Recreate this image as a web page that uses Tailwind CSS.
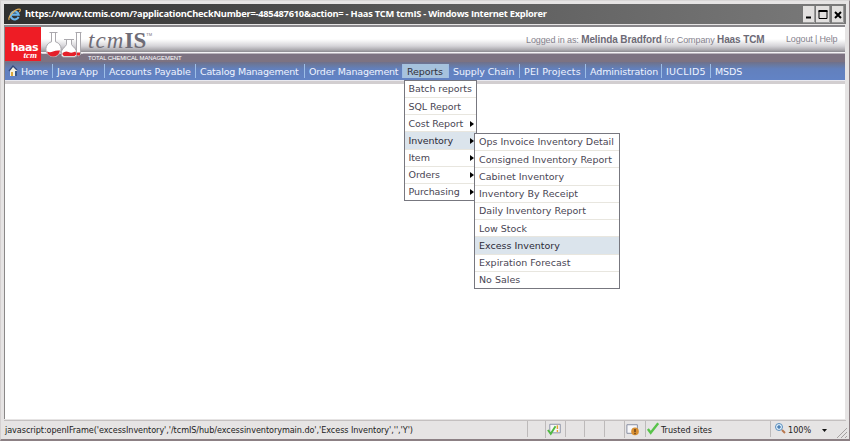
<!DOCTYPE html>
<html lang="en">
<head>
<meta charset="utf-8">
<title>Haas TCM tcmIS</title>
<script src="https://cdn.jsdelivr.net/npm/@tailwindcss/browser@4"></script>
</head>
<body class="w-[850px] h-[441px] overflow-hidden bg-[#e6e4e4] font-['DejaVu_Sans',sans-serif] text-[9.5px] whitespace-nowrap">
<div class="relative flex h-[441px] w-[850px] flex-col border-x-[1px] border-b-2 border-l-[#d4d0d0] border-r-[#8c8084] border-b-[#8c8084] border-t border-t-[#d8d6d6] px-[3px] pt-[3px]">
  <!-- title bar -->
  <header class="flex h-[20px] shrink-0 items-center bg-linear-to-r from-[#303030] via-[#5a5a5a] to-[#7a7a7a] pl-[4px]">
    <svg class="size-[13px]" viewBox="0 0 13 13" fill="none"><path d="M10.5 8.8A4 4 0 1 1 10.6 6.6H3.4" stroke="#6bb4ea" stroke-width="2.1"/><path d="M1.2 12C-.6 9 7 .2 12 1.2c.8.8 0 2-.8 3" stroke="#e5b05a" stroke-width="1.1"/></svg>
    <h1 class="ml-[4px] w-[524px] font-['Open_Sans',sans-serif] text-[9.3px] font-bold leading-[18px] tracking-[-0.24px] text-white">https://www.tcmis.com/?applicationCheckNumber=-485487610&amp;action= - Haas TCM tcmIS - Windows Internet Explorer</h1>
    <div class="ml-auto mr-[2px] flex gap-[1px]">
      <svg class="h-[17px] w-[12px] bg-[#e2e0df]" viewBox="0 0 12 17"><path d="M3 11.5h5" stroke="#000" stroke-width="2"/><path d="M11.5 0v16.5H0" fill="none" stroke="#999"/></svg>
      <svg class="h-[17px] w-[14px] bg-[#e2e0df]" viewBox="0 0 14 17"><path d="M3 5h8v7.5h-8z" fill="none" stroke="#000"/><path d="M2.5 5h9" stroke="#000" stroke-width="2"/><path d="M13.5 0v16.5H0" fill="none" stroke="#999"/></svg>
      <svg class="ml-[1px] h-[17px] w-[12px] bg-[#e2e0df]" viewBox="0 0 12 17"><path d="M3 6l6 6M9 6l-6 6" stroke="#000" stroke-width="2"/><path d="M11.5 0v16.5H0" fill="none" stroke="#999"/></svg>
    </div>
  </header>

  <main class="mt-[1px] mr-[1px] flex h-[394px] shrink-0 flex-col border-l border-t-2 border-l-[#8a8888] border-t-[#8a888c] bg-white">
    <!-- banner -->
    <div class="flex h-[35px] shrink-0 bg-[linear-gradient(to_bottom,#fff_0px,#fff_12px,#eeeeef_15px,#d5d4d8_19px,#aaa8ad_23px,#8b8990_25px,#f4f3f5_25px,#f4f3f5_26px,#7d7382_27px,#7d7382_35px)]">
      <div class="flex h-[34px] w-[36px] flex-col items-end bg-[#ee1c25] pr-[3px] pt-[15px] text-white">
        <b class="text-[11px] leading-[11px] tracking-[-0.5px]">haas</b>
        <b class="pr-[1px] font-['Liberation_Serif',serif] text-[9px] italic leading-[5px]">tcm</b>
      </div>
      <svg class="ml-[1px] h-[32px] w-[41px]" viewBox="0 0 41 32" fill="none">
        <path d="M0 26h41" stroke="#f4f3f5"/>
        <g fill="#fff" stroke="#aaa8ad">
          <path d="M7.500 5.500h8M9.500 5.500v9.300a7.600 7.600 0 1 0 4 0V5.500"/>
          <path d="M22 12.500h10M24.500 12.500v5q-1 2-3.500 4t-1.500 7q.5 1.500 2 1.500h11q2 0 2.500-2 .5-4-2-6.500t-3.500-4v-5"/>
          <path d="M33.500 5.500h6M34.500 5.500v22q2 3 4 0V5.500"/>
        </g>
        <path d="M5 24.500q3 1.500 6 0t7-1q-1 5.500-6.500 6-5.500 0-6.500-5zM20.500 26q3-2.500 6-1t7-.5l1 3-2 1.500H22q-2-.5-1.500-3zM35 25.500h3v3h-3z" fill="#e51f29"/>
      </svg>
      <div class="ml-[5px] w-[120px]">
        <div class="h-[26px] font-['Liberation_Serif',serif] text-[23px] leading-[27px] text-[#6f6c76]"><i class="tracking-[1.1px]">tcm</i><b>IS</b><sup class="relative -top-[12px] font-['Liberation_Sans',sans-serif] text-[4px]">TM</sup></div>
        <div class="font-['Liberation_Sans',sans-serif] text-[6px] leading-[10px] tracking-[-0.08px] text-white">TOTAL CHEMICAL MANAGEMENT</div>
      </div>
      <div class="ml-auto mr-[8px] flex pt-[5px] font-['Liberation_Sans',sans-serif] text-[9px] leading-[15px] text-[#85828d]">
        <p class="w-[260px] tracking-[-0.1px]">Logged in as: <b class="text-[10px] text-[#6d6a76]">Melinda Bradford</b> for Company <b class="text-[10px] text-[#6d6a76]">Haas TCM</b></p>
        <p class="w-[51px] tracking-[-0.15px]">Logout | Help</p>
      </div>
    </div>
    <!-- menu bar -->
    <nav class="flex h-[18px] shrink-0 items-center bg-[linear-gradient(to_bottom,#717089_0px,#69799f_3px,#6280bd_7px,#6283c5_18px)] tracking-[-0.1px] text-[#eef3ff] *:h-[14px] *:border-r *:border-[#9cbde6] *:pl-[4px] *:leading-[15px]">
      <div class="flex w-[48px]"><svg class="-ml-[1px] mr-[2px] mt-[1px] size-[11px] shrink-0" viewBox="0 0 11 11"><path d="M2 5l3-4 4 4v6H2z" fill="#f5f1df"/><path d="M1 6l4-5 4 4" fill="none" stroke="#344a7c" stroke-width="1.3"/><path d="M3 7h2v4H3z" fill="#dba93c"/><path d="M7 6h2v5H7z" fill="#35588c"/></svg><span class="tracking-[-0.3px]">Home</span></div>
      <div class="w-[52px]">Java App</div>
      <div class="w-[91px]">Accounts Payable</div>
      <div class="w-[109px] tracking-[-0.2px]">Catalog Management</div>
      <div class="w-[98px] tracking-[-0.2px]">Order Management</div>
      <div class="w-[46px] bg-[#a6c2dd] text-[#30303a]">Reports</div>
      <div class="w-[71px]">Supply Chain</div>
      <div class="w-[66px] tracking-[0.15px]">PEI Projects</div>
      <div class="w-[76px]">Administration</div>
      <div class="w-[49px] tracking-[0.3px]">IUCLID5</div>
      <div class="border-r-0!">MSDS</div>
    </nav>
    <div class="h-[4px] shrink-0 border-t border-[#e9e9f0] bg-[#d2ced0]"></div>
  </main>

  <!-- status bar -->
  <footer class="mt-[1px] flex h-[17px] items-stretch border-t border-[#c4c0c0] font-['DejaVu_Sans_Condensed','DejaVu_Sans',sans-serif] text-[9px] leading-[18px] text-[#222]">
    <span class="w-[523px] pl-[1px] tracking-[-0.06px]">javascript:openIFrame('excessInventory','/tcmIS/hub/excessinventorymain.do','Excess Inventory','','Y')</span>
    <div class="flex *:border-l *:border-[#bdbaba]">
      <i class="w-[18px]"></i>
      <svg class="h-[17px] w-[20px]" viewBox="0 0 20 17" fill="none"><path d="M4 3h11v9H4z" fill="#f8f8fa" stroke="#8990a4"/><path d="M2 9l3 4 5-8" stroke="#50b943" stroke-width="2"/><path d="M12 4v4m0 1v2" stroke="#e3a534" stroke-width="1.5"/></svg>
      <i class="w-[19px]"></i><i class="w-[20px]"></i><i class="w-[20px]"></i>
      <svg class="h-[17px] w-[21px]" viewBox="0 0 21 17"><path d="M2 3.5h11v9H2z" fill="#f8f8fa" stroke="#858ba0"/><circle cx="10.500" cy="10.500" r="4" fill="#d99032"/><path d="M10.500 8v3m0 1v1.500" stroke="#503017" stroke-width="1.3"/></svg>
      <div class="flex w-[125px]"><svg class="h-[15px] w-[15px]" viewBox="0 0 16 15" fill="none"><path d="M2 8l3 4 8-10" stroke="#58c34a" stroke-width="2.5"/></svg><span>Trusted sites</span></div>
      <div class="flex w-[70px] pl-[4px]"><svg class="h-[15px] w-[11px] overflow-visible" viewBox="0 0 11 15" fill="none"><circle cx="4" cy="6" r="3.5" fill="#dff0fb" stroke="#5c8ebd"/><path d="M7 9l3 3" stroke="#b8774d" stroke-width="2"/><path d="M2 6h4M4 4v4" stroke="#1f5c9f"/></svg><span class="ml-[2px] w-[34px]">100%</span><svg class="mt-[2px] h-[15px] w-[5px]" viewBox="0 0 5 15"><path d="M0 6h5L2.500 9z" fill="#111"/></svg></div>
    </div>
  </footer>
  <svg class="absolute bottom-0 right-[1px] size-[12px]" viewBox="0 0 12 12"><path d="M1 11L11 1M5 11l6-6M9 11l2-2" stroke="#a5a1a1"/></svg>

  <!-- Reports menu -->
  <ul class="absolute left-[403px] top-[79px] flex h-[121px] w-[73px] flex-col border border-[#77777f] bg-white text-[#4a4654] *:flex *:flex-1 *:items-center *:border-b *:border-[#e8e6df] *:pl-[3.500px] *:pt-[1px] *:tracking-[-0.08px] [&_svg]:ml-auto [&_svg]:mr-[2px] [&_svg]:h-[6px] [&_svg]:w-[4px]">
    <li>Batch reports</li>
    <li>SQL Report</li>
    <li>Cost Report<svg viewBox="0 0 4 6"><path d="M0 0l4 3-4 3z"/></svg></li>
    <li class="bg-[#dbe4ec] text-[#2c2a38]">Inventory<svg viewBox="0 0 4 6"><path d="M0 0l4 3-4 3z"/></svg></li>
    <li>Item<svg viewBox="0 0 4 6"><path d="M0 0l4 3-4 3z"/></svg></li>
    <li>Orders<svg viewBox="0 0 4 6"><path d="M0 0l4 3-4 3z"/></svg></li>
    <li class="border-b-0!">Purchasing<svg viewBox="0 0 4 6"><path d="M0 0l4 3-4 3z"/></svg></li>
  </ul>
  <!-- Inventory submenu -->
  <ul class="absolute left-[473px] top-[132px] flex h-[156px] w-[146px] flex-col border border-[#77777f] bg-white text-[#4a4654] *:flex *:flex-1 *:items-center *:border-b *:border-[#e8e6df] *:pl-[4px] *:pt-[1px]">
    <li>Ops Invoice Inventory Detail</li>
    <li>Consigned Inventory Report</li>
    <li>Cabinet Inventory</li>
    <li>Inventory By Receipt</li>
    <li>Daily Inventory Report</li>
    <li>Low Stock</li>
    <li class="bg-[#dbe4ec] text-[#2c2a38]">Excess Inventory</li>
    <li>Expiration Forecast</li>
    <li class="border-b-0!">No Sales</li>
  </ul>
</div>
</body>
</html>
